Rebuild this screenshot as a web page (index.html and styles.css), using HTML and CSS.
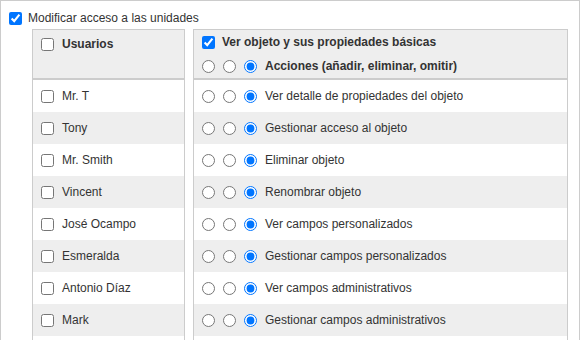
FILE: index.html
```html
<!DOCTYPE html>
<html lang="es">
<head>
    <meta charset="UTF-8">
    <meta name="viewport" content="width=device-width, initial-scale=1.0">
    <title>Acceso a las unidades</title>
    <link rel="stylesheet" href="styles.css">
</head>
<body>
    <div class="panel">
        <label class="main-option">
            <input type="checkbox" checked> Modificar acceso a las unidades
        </label>
        <div class="columns">
            <div class="users">
                <div class="users-head">
                    <label class="line"><input type="checkbox"> <b>Usuarios</b></label>
                </div>
                <div class="row"><label class="line"><input type="checkbox"> Mr. T</label></div>
                <div class="row"><label class="line"><input type="checkbox"> Tony</label></div>
                <div class="row"><label class="line"><input type="checkbox"> Mr. Smith</label></div>
                <div class="row"><label class="line"><input type="checkbox"> Vincent</label></div>
                <div class="row"><label class="line"><input type="checkbox"> José Ocampo</label></div>
                <div class="row"><label class="line"><input type="checkbox"> Esmeralda</label></div>
                <div class="row"><label class="line"><input type="checkbox"> Antonio Díaz</label></div>
                <div class="row"><label class="line"><input type="checkbox"> Mark</label></div>
                <div class="row"></div>
            </div>
            <div class="perms">
                <div class="perms-head">
                    <label class="line head-top"><input type="checkbox" checked> <b>Ver objeto y sus propiedades básicas</b></label>
                    <div class="line head-bottom">
                        <input type="radio" name="all"><input type="radio" name="all"><input type="radio" name="all" checked>
                        <b>Acciones (añadir, eliminar, omitir)</b>
                    </div>
                </div>
                <div class="row"><div class="line">
                    <input type="radio" name="p1"><input type="radio" name="p1"><input type="radio" name="p1" checked>
                    Ver detalle de propiedades del objeto</div></div>
                <div class="row"><div class="line">
                    <input type="radio" name="p2"><input type="radio" name="p2"><input type="radio" name="p2" checked>
                    Gestionar acceso al objeto</div></div>
                <div class="row"><div class="line">
                    <input type="radio" name="p3"><input type="radio" name="p3"><input type="radio" name="p3" checked>
                    Eliminar objeto</div></div>
                <div class="row"><div class="line">
                    <input type="radio" name="p4"><input type="radio" name="p4"><input type="radio" name="p4" checked>
                    Renombrar objeto</div></div>
                <div class="row"><div class="line">
                    <input type="radio" name="p5"><input type="radio" name="p5"><input type="radio" name="p5" checked>
                    Ver campos personalizados</div></div>
                <div class="row"><div class="line">
                    <input type="radio" name="p6"><input type="radio" name="p6"><input type="radio" name="p6" checked>
                    Gestionar campos personalizados</div></div>
                <div class="row"><div class="line">
                    <input type="radio" name="p7"><input type="radio" name="p7"><input type="radio" name="p7" checked>
                    Ver campos administrativos</div></div>
                <div class="row"><div class="line">
                    <input type="radio" name="p8"><input type="radio" name="p8"><input type="radio" name="p8" checked>
                    Gestionar campos administrativos</div></div>
                <div class="row"></div>
            </div>
        </div>
    </div>
</body>
</html>
```

FILE: styles.css
```css
body {
    margin: 0;
    font-family: "Liberation Sans", Arial, sans-serif;
    font-size: 12px;
    color: #333;
}

input {
    margin: 0;
    width: 13px;
    height: 13px;
    flex: none;
}

.panel {
    width: 578px;
    border: 1px solid #ccc;
    padding-bottom: 20px;
}

.main-option {
    display: flex;
    align-items: center;
    gap: 6px;
    height: 18px;
    padding: 8px 0 2px 8px;
}

.columns {
    display: flex;
    align-items: flex-start;
    gap: 8px;
    padding-left: 31px;
}

.users {
    width: 151px;
    border: 1px solid #ccc;
}

.perms {
    width: 373px;
    border: 1px solid #ccc;
}

.line {
    display: flex;
    align-items: center;
    gap: 8px;
    padding-left: 8px;
}

.users-head {
    height: 41px;
    padding-top: 7px;
    background-color: #eee;
    border-bottom: 2px solid #ccc;
}

.perms-head {
    height: 48px;
    background-color: #eee;
    border-bottom: 2px solid #ccc;
}

.head-top {
    height: 24px;
    gap: 7px;
}

.head-bottom {
    height: 24px;
}

.row {
    height: 32px;
    display: flex;
    align-items: center;
}

.row:nth-child(odd) {
    background-color: #eee;
}
```
